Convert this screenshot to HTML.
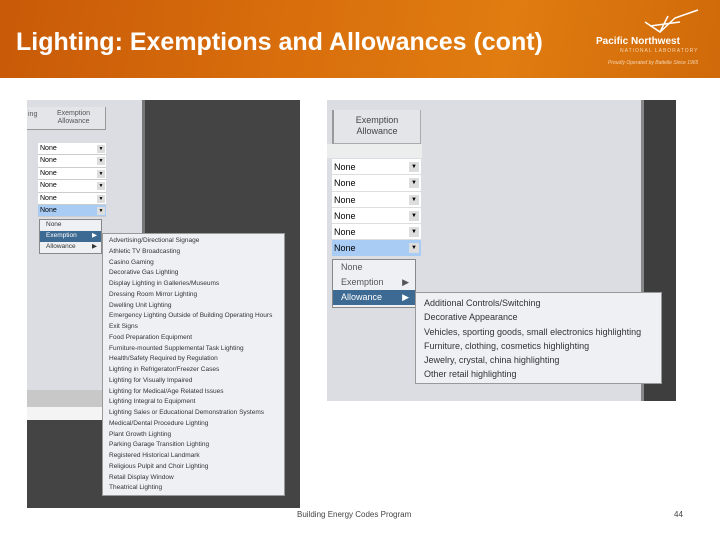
<!DOCTYPE html><html><head><style>
*{margin:0;padding:0;box-sizing:border-box}
body{width:720px;height:540px;background:#fff;position:relative;overflow:hidden;font-family:"Liberation Sans",sans-serif}
.a{position:absolute}
.hdr{left:0;top:0;width:720px;height:78px;background:linear-gradient(100deg,#c85a08 0%,#d86e0c 40%,#e07c10 70%,#d06a0a 100%)}
.t{left:16px;top:28px;color:#fff;font-size:25px;font-weight:bold;white-space:nowrap}
.sm{font-size:7px;color:#222;white-space:nowrap}
.dd{background:#fff;border-bottom:1px solid #ccc;font-size:7px;padding-left:2px;line-height:11px;height:12.4px}
.ar{position:absolute;right:1px;top:2px;width:8px;height:8px;background:#ddd;font-size:5px;text-align:center;line-height:8px}
.li{font-size:6.5px;color:#333;line-height:10.75px;padding-left:6px;white-space:nowrap}
.ri{font-size:9px;color:#333;line-height:14.3px;padding-left:8px;white-space:nowrap}
.dd2{background:#fff;font-size:9px;padding-left:2px;line-height:16px;height:16.3px;border-bottom:1px solid #ddd;position:relative}
.ar2{position:absolute;right:2px;top:3px;width:10px;height:10px;background:#ddd;font-size:6px;text-align:center;line-height:10px}
</style></head><body>
<div class="a hdr"></div>
<div class="a t">Lighting: Exemptions and Allowances (cont)</div>
<div class="a" style="left:596px;top:36px;color:#fff;font-size:10px;font-weight:bold">Pacific Northwest</div>
<div class="a" style="left:620px;top:48px;color:#f6d6b0;font-size:5px;letter-spacing:1px">NATIONAL LABORATORY</div>
<div class="a" style="left:608px;top:60px;color:#f6d6b0;font-size:5px;font-style:italic">Proudly Operated by Battelle Since 1965</div>
<svg class="a" style="left:640px;top:8px" width="60" height="30"><path d="M5 14 L20 24 L35 10 L58 2 M20 24 L28 8 M10 18 L40 14" stroke="#fff" stroke-width="1.5" fill="none"/></svg>

<div class="a" style="left:27px;top:100px;width:273px;height:408px;background:#444"></div>
<div class="a" style="left:27px;top:100px;width:115px;height:290px;background:#dcdde2"></div>
<div class="a" style="left:27px;top:390px;width:115px;height:17px;background:#c8c8c8"></div>
<div class="a" style="left:27px;top:407px;width:115px;height:13px;background:#f4f4f4"></div>
<div class="a" style="left:142px;top:100px;width:3px;height:320px;background:#777"></div>
<div class="a" style="left:27px;top:107px;width:79px;height:23px;border-bottom:1px solid #999;border-right:1px solid #999;background:#e4e5e8"></div>
<div class="a sm" style="left:28px;top:111px;color:#555">ing</div>
<div class="a sm" style="left:57px;top:110px;color:#555;text-align:center;line-height:8px">Exemption<br>Allowance</div>
<div class="a" style="left:38px;top:143px;width:68px">
<div class="dd" style="position:relative">None<span class="ar">▼</span></div>
<div class="dd" style="position:relative">None<span class="ar">▼</span></div>
<div class="dd" style="position:relative">None<span class="ar">▼</span></div>
<div class="dd" style="position:relative">None<span class="ar">▼</span></div>
<div class="dd" style="position:relative">None<span class="ar">▼</span></div>
<div class="dd" style="position:relative;background:#a8ccf4">None<span class="ar">▼</span></div>
</div>
<div class="a" style="left:39px;top:219px;width:63px;height:35px;background:#eef0f4;border:1px solid #888">
<div class="li" style="padding-left:6px">None</div>
<div class="li" style="background:#3d6a92;color:#fff">Exemption <span style="float:right;padding-right:4px">▶</span></div>
<div class="li">Allowance <span style="float:right;padding-right:4px">▶</span></div>
</div>
<div class="a" style="left:102px;top:233px;width:183px;height:263px;background:#eef0f4;border:1px solid #999;padding-top:2px">
<div class="li">Advertising/Directional Signage</div><div class="li">Athletic TV Broadcasting</div><div class="li">Casino Gaming</div><div class="li">Decorative Gas Lighting</div><div class="li">Display Lighting in Galleries/Museums</div><div class="li">Dressing Room Mirror Lighting</div><div class="li">Dwelling Unit Lighting</div><div class="li">Emergency Lighting Outside of Building Operating Hours</div><div class="li">Exit Signs</div><div class="li">Food Preparation Equipment</div><div class="li">Furniture-mounted Supplemental Task Lighting</div><div class="li">Health/Safety Required by Regulation</div><div class="li">Lighting in Refrigerator/Freezer Cases</div><div class="li">Lighting for Visually Impaired</div><div class="li">Lighting for Medical/Age Related Issues</div><div class="li">Lighting Integral to Equipment</div><div class="li">Lighting Sales or Educational Demonstration Systems</div><div class="li">Medical/Dental Procedure Lighting</div><div class="li">Plant Growth Lighting</div><div class="li">Parking Garage Transition Lighting</div><div class="li">Registered Historical Landmark</div><div class="li">Religious Pulpit and Choir Lighting</div><div class="li">Retail Display Window</div><div class="li">Theatrical Lighting</div>
</div>

<div class="a" style="left:327px;top:100px;width:349px;height:301px;background:#dcdde2"></div>
<div class="a" style="left:641px;top:100px;width:3px;height:301px;background:#888"></div>
<div class="a" style="left:644px;top:100px;width:32px;height:301px;background:#3e3e3e"></div>
<div class="a" style="left:332px;top:110px;width:89px;height:34px;background:#e4e5e8;border-left:2px solid #999;border-bottom:1px solid #aaa;border-right:1px solid #aaa;font-size:9px;color:#444;text-align:center;line-height:11px;padding-top:5px">Exemption<br>Allowance</div>
<div class="a" style="left:327px;top:144px;width:95px;height:14px;background:#eceded"></div>
<div class="a" style="left:332px;top:159px;width:89px">
<div class="dd2">None<span class="ar2">▼</span></div><div class="dd2">None<span class="ar2">▼</span></div><div class="dd2">None<span class="ar2">▼</span></div><div class="dd2">None<span class="ar2">▼</span></div><div class="dd2">None<span class="ar2">▼</span></div><div class="dd2" style="background:#a8ccf4">None<span class="ar2">▼</span></div>
</div>
<div class="a" style="left:332px;top:259px;width:84px;height:49px;background:#eef0f4;border:1px solid #888">
<div class="ri" style="line-height:15px;color:#555">None</div>
<div class="ri" style="line-height:15px;color:#555">Exemption<span style="float:right;padding-right:6px">▶</span></div>
<div class="ri" style="line-height:15px;background:#3d6a92;color:#fff">Allowance<span style="float:right;padding-right:6px">▶</span></div>
</div>
<div class="a" style="left:415px;top:292px;width:247px;height:92px;background:#eef0f4;border:1px solid #999;padding-top:3px">
<div class="ri">Additional Controls/Switching</div><div class="ri">Decorative Appearance</div><div class="ri">Vehicles, sporting goods, small electronics highlighting</div><div class="ri">Furniture, clothing, cosmetics highlighting</div><div class="ri">Jewelry, crystal, china highlighting</div><div class="ri">Other retail highlighting</div>
</div>

<div class="a" style="left:297px;top:510px;font-size:8px;color:#444">Building Energy Codes Program</div>
<div class="a" style="left:674px;top:510px;font-size:8px;color:#444">44</div>
</body></html>
